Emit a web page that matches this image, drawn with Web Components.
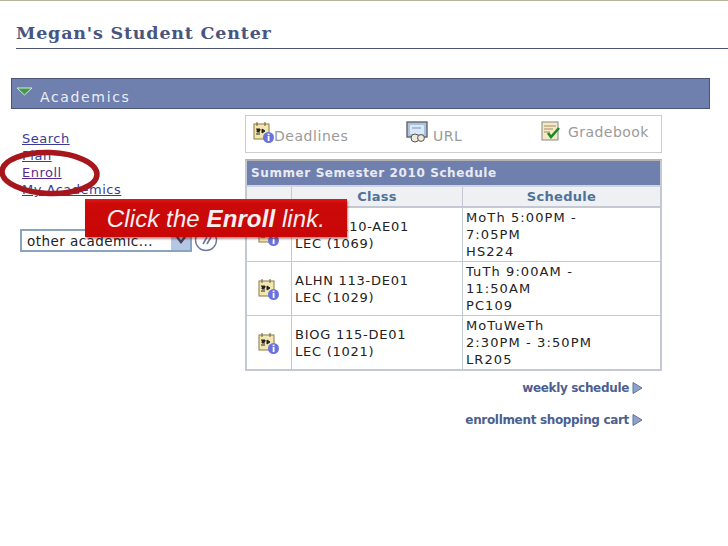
<!DOCTYPE html>
<html><head><meta charset="utf-8"><style>
html,body{margin:0;padding:0;background:#fff}
body{width:728px;height:546px;overflow:hidden;font-family:"DejaVu Sans",sans-serif}
</style></head><body>
<student-center></student-center>
<template id="cal"><style>:host{display:inline-block;width:22px;height:23px;line-height:0}</style>
<svg width="22" height="23" viewBox="0 0 22 23"><rect x="1" y="3" width="15" height="15" fill="#f4e6b0" stroke="#8a7a40"/><path d="M4 1v4M12 1v4" stroke="#6a5a30"/><path d="M3 8h4v1.5H4V11h3M3 13h4M9 8l3 2-3 2z" stroke="#222" fill="#222" stroke-width="1"/><circle cx="15.5" cy="16.5" r="5.5" fill="#6a72dc"/><rect x="14.7" y="15" width="1.8" height="5" fill="#fff"/><rect x="14.7" y="12.6" width="1.8" height="1.6" fill="#fff"/></svg></template>
<script>
const def=(n,html,init)=>customElements.define(n,class extends HTMLElement{constructor(){super();this.attachShadow({mode:'open'}).innerHTML=html;}connectedCallback(){init&&init(this)}});
def('cal-icon',document.getElementById('cal').innerHTML);
def('side-links',`<style>:host{display:block;font:13px/17px "DejaVu Sans",sans-serif;padding:15px 0 0 22px;letter-spacing:.5px}
a{display:block;width:max-content;color:#3b3b96;text-decoration:underline}a.v{color:#5b2a90}
.sel{box-sizing:border-box;width:172px;height:23px;border:2px solid #8aa4c0;display:flex;align-items:center;padding:2px 0 0 5px;font-size:13.5px;color:#222;letter-spacing:.45px;position:relative}
.ar{position:absolute;right:0;top:0;bottom:0;width:19px;background:#b4c8e6;display:flex;align-items:center;justify-content:center}
.row{display:flex;align-items:center;gap:2px;margin:30px 0 0 -2px}
</style>
<a>Search</a><a>Plan</a><a class="v">Enroll</a><a>My Academics</a>
<div class="row"><div class="sel">other academic...<span class="ar"><svg width="10" height="8"><path d="M1 1l4 5 4-5" stroke="#445" stroke-width="2.4" fill="none"/></svg></span></div>
<svg width="24" height="24"><circle cx="12" cy="12" r="10.5" fill="#fff" stroke="#6a7a9c" stroke-width="1.4"/><path d="M9 16l4-7M13 16l4-7" stroke="#6a7a9c" stroke-width="1.6"/></svg></div>`);
def('tool-box',`<style>:host{display:flex;box-sizing:border-box;width:417px;height:38px;border:1px solid #ccc;color:#9a9a9a;font:14px "DejaVu Sans",sans-serif;letter-spacing:.55px;position:relative}
.i{display:flex;align-items:flex-start;padding-top:5px}
.t{line-height:30px}
</style>
<div class="i" style="padding-left:7px;width:160px;box-sizing:border-box"><cal-icon></cal-icon><span class="t" style="margin-left:-1px">Deadlines</span></div>
<div class="i" style="width:135px;box-sizing:border-box;padding-top:5px"><svg width="22" height="22" viewBox="0 0 22 22"><rect x="1" y="1" width="20" height="15" fill="#a9c3e4" stroke="#666" stroke-width="1.4"/><rect x="4" y="4" width="14" height="9" fill="#dbe8f6"/><path d="M6 7h9" stroke="#7a90b8"/><circle cx="9" cy="17" r="4" fill="#f0eadc" stroke="#555"/><circle cx="15" cy="17" r="3.4" fill="#f0eadc" stroke="#555"/></svg><span class="t" style="margin-left:5px">URL</span></div>
<div class="i" style="padding-top:4px"><svg width="21" height="22" viewBox="0 0 21 22"><rect x="1" y="2" width="16" height="18" fill="#f5e8c4" stroke="#888"/><path d="M3 6h12M3 9h9M3 12h6" stroke="#a58e60"/><path d="M7 13l3 4 8-9" stroke="#1c8a24" stroke-width="2.6" fill="none"/></svg><span class="t" style="margin-left:6px;line-height:25px;letter-spacing:.45px">Gradebook</span></div>`);
def('sched-table',`<style>:host{display:block;margin-top:6px;box-sizing:border-box;width:417px;border:2px solid #c3c8d2;border-top-color:#b2b2b2;font:13px/17px "DejaVu Sans",sans-serif;color:#222}
.cap{height:24px;background:#6f7fae;color:#e9ebf3;font:bold 12px/25px "DejaVu Sans",sans-serif;letter-spacing:.6px;padding-left:4px;border-bottom:2px solid #cfd4dd}
.g{display:grid;grid-template-columns:45px 171px 1fr}
.g>div{box-sizing:border-box;border-right:1px solid #c3c8d2;border-bottom:1px solid #c3c8d2;height:54px;padding:0 0 0 3px;display:flex;flex-direction:column;justify-content:center;letter-spacing:.75px}
.g>div:nth-child(3n){border-right:0;letter-spacing:1.1px}
.g>div.h{height:21px;background:#eef0f3;color:#4f7298;font-weight:bold;text-align:center;letter-spacing:.3px;font-size:13px;border-bottom:2px solid #c3c8d2;padding:0}
.g>div.ic{align-items:center;padding:0}.ic cal-icon{margin-top:1px}
.g>div:nth-last-child(-n+3){border-bottom:0;height:53px}
</style>
<div class="cap">Summer Semester 2010 Schedule</div>
<div class="g"><div class="h"></div><div class="h">Class</div><div class="h">Schedule</div>
<div class="ic"><cal-icon></cal-icon></div><div><span>ECON 110-AE01</span><span>LEC (1069)</span></div><div><span>MoTh 5:00PM -</span><span>7:05PM</span><span>HS224</span></div>
<div class="ic"><cal-icon></cal-icon></div><div><span>ALHN 113-DE01</span><span>LEC (1029)</span></div><div><span>TuTh 9:00AM -</span><span>11:50AM</span><span>PC109</span></div>
<div class="ic"><cal-icon></cal-icon></div><div><span>BIOG 115-DE01</span><span>LEC (1021)</span></div><div><span>MoTuWeTh</span><span>2:30PM - 3:50PM</span><span>LR205</span></div>
</div>`);
def('arrow-link',`<style>:host{display:flex;justify-content:flex-end;align-items:center;gap:3px;font:bold 12px/16px "DejaVu Sans",sans-serif;color:#4d5f8e;letter-spacing:-.33px;padding-right:19px}</style><slot></slot><svg width="11" height="12"><path d="M1 .5L10 6 1 11.500z" fill="#8ea2cc" stroke="#5f7299"/></svg>`);
def('student-center',`<style>:host{display:block;position:relative;width:728px;height:546px;border-top:1px solid #b8b39c;box-sizing:border-box}
h1{margin:0 0 0 16px;padding-top:20px;height:27px;font:bold 17.5px/25px "DejaVu Serif",serif;color:#47557f;letter-spacing:.8px;border-bottom:1px solid #4c5674}
.bar{box-sizing:border-box;margin:29px 18px 0 11px;height:31px;background:#6f7fae;border:1px solid #4a5578;color:#eceef5;font:14px/37px "DejaVu Sans",sans-serif;letter-spacing:1.65px;padding-left:28px;position:relative}
.bar svg{position:absolute;left:4px;top:8px}
.main{display:grid;grid-template-columns:245px 417px;margin-top:6px}
.links{display:flex;flex-direction:column;gap:16px;margin-top:9px}
.ell{position:absolute;left:-2px;top:147px}
.call{position:absolute;left:85px;top:198px;box-sizing:border-box;width:262px;height:38px;background:linear-gradient(#e01818 0,#cc0a0a 12%,#c80606 100%);box-shadow:1px 2px 2px rgba(90,0,0,.45);color:#f6f0f0;font:italic 24px/40px "Liberation Sans",sans-serif;letter-spacing:.1px;text-align:center;white-space:nowrap}
.call b{font-weight:bold}
</style>
<h1>Megan's Student Center</h1>
<div class="bar"><svg width="17" height="9"><path d="M1 1h15L8.500 8z" fill="#3f9a4f" stroke="#dfe9d8"/></svg>Academics</div>
<div class="main"><side-links></side-links><div><tool-box></tool-box><sched-table></sched-table>
<div class="links"><arrow-link>weekly schedule</arrow-link><arrow-link>enrollment shopping cart</arrow-link></div></div></div>
<svg class="ell" width="106" height="50" viewBox="0 0 106 50"><ellipse cx="51.500" cy="25" rx="47.500" ry="20.500" transform="rotate(2 51.500 25)" fill="none" stroke="#a6161c" stroke-width="5.500"/></svg>
<div class="call">Click the <b>Enroll</b> link.</div>`);
</script>
</body></html>
